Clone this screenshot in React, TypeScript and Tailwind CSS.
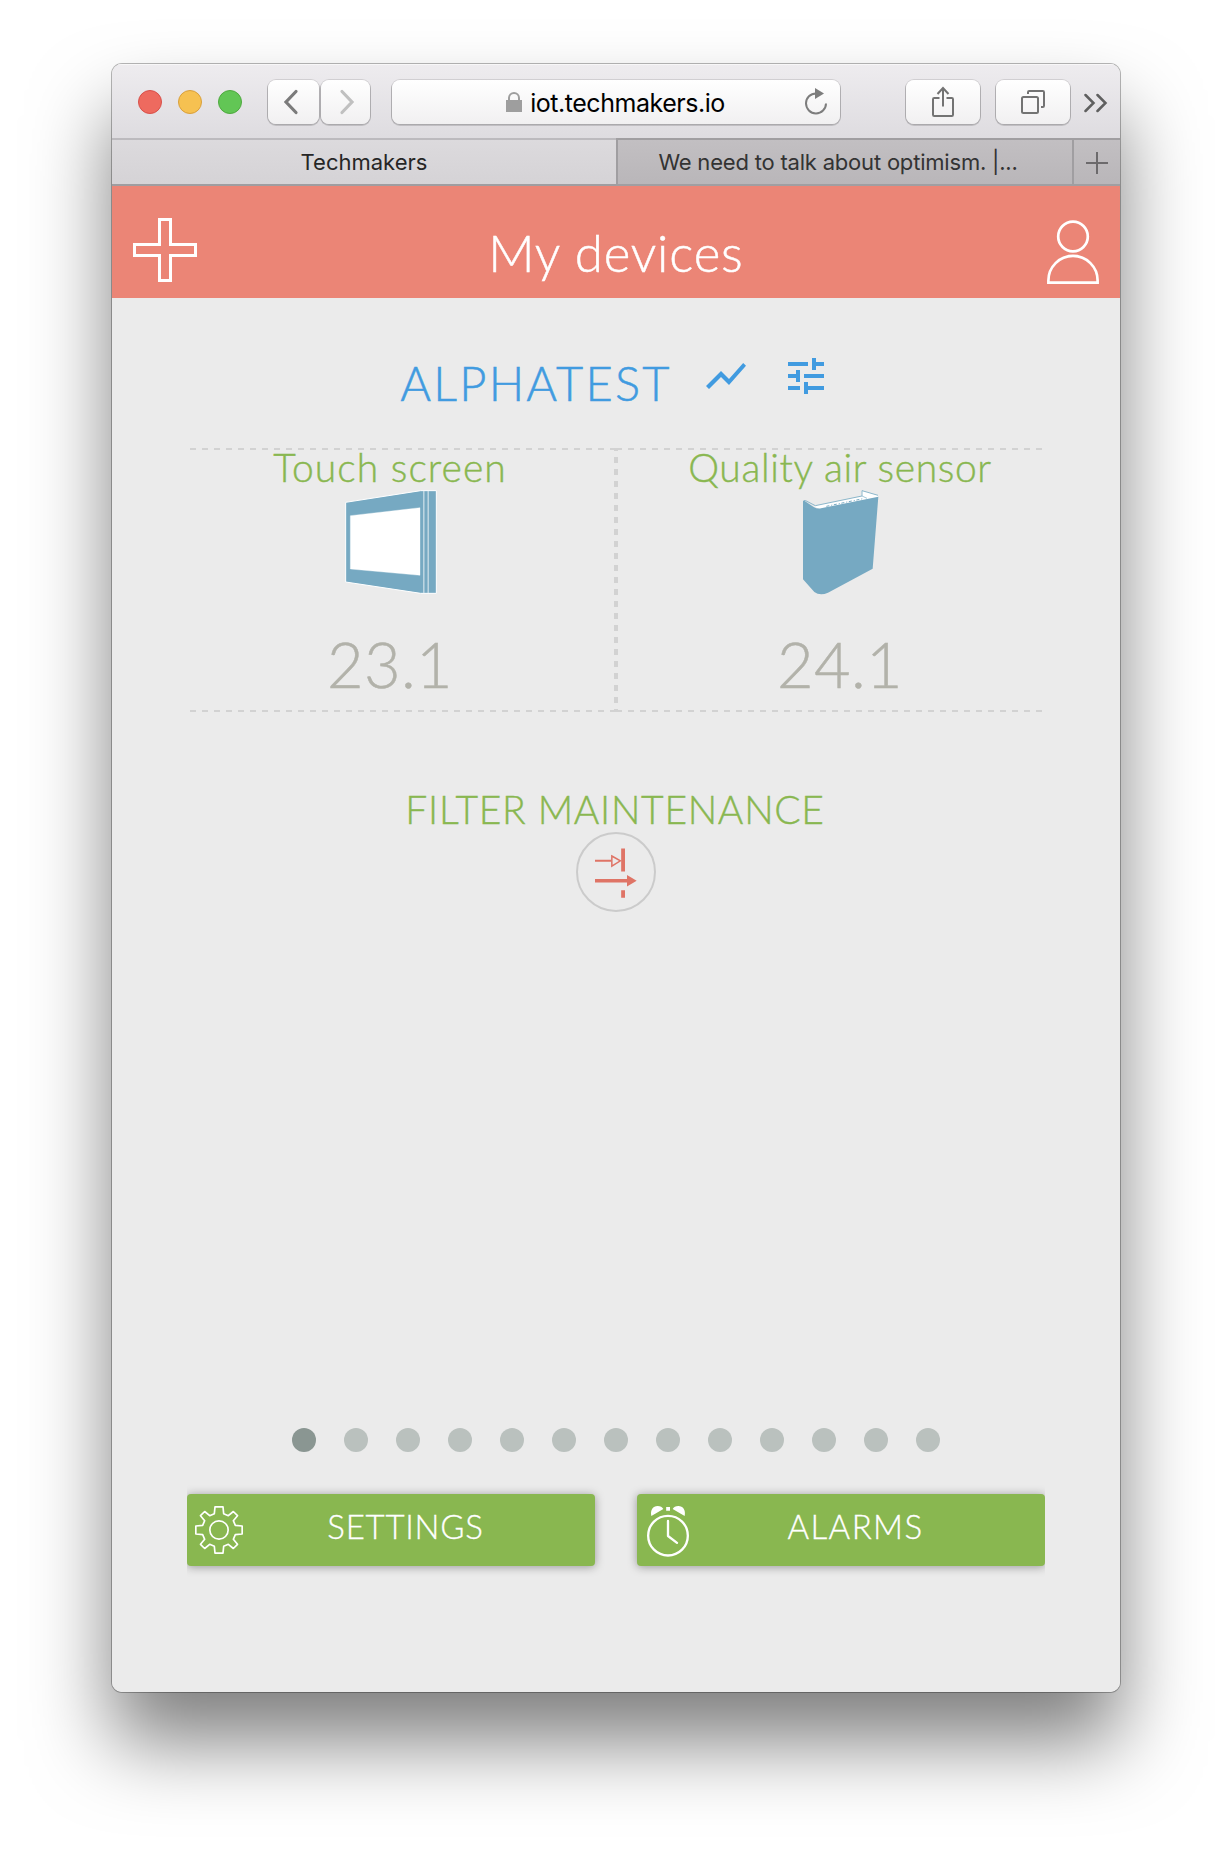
import type { ReactNode } from "react";
import { MdShowChart, MdTune } from "react-icons/md";

const BLUE = "#76a9c2";

function ToolbarButton({ className, children }: { className: string; children: ReactNode }) {
  return (
    <button
      className={`flex h-11 items-center justify-center rounded-[8px] bg-linear-to-b from-white to-[#f1f0f1] shadow-[0_0_0_1px_rgba(0,0,0,0.11),0_1px_0_1px_rgba(0,0,0,0.14)] ${className}`}
    >
      {children}
    </button>
  );
}

function Toolbar() {
  return (
    <div className="flex h-[74px] items-start bg-linear-to-b from-[#eeecef] to-[#dedce0] pt-4 pl-[26px] shadow-[inset_0_1px_0_#f8f7f8]">
      <div className="flex h-11 items-center gap-4">
        <span className="size-6 rounded-full border border-[#d8504a] bg-[#ee6a5f]" />
        <span className="size-6 rounded-full border border-[#d9a03c] bg-[#f6c151]" />
        <span className="size-6 rounded-full border border-[#4fa93f] bg-[#62c655]" />
      </div>
      <div className="ml-[26px] flex gap-0.5">
        <ToolbarButton className="w-[51px]">
          <svg width="16" height="26" viewBox="0 0 16 26" fill="none" stroke="#7b7b7b" strokeWidth="3.2" strokeLinecap="round" className="-ml-1.5">
            <path d="M13 2.500 3 13l10 10.500" />
          </svg>
        </ToolbarButton>
        <ToolbarButton className="w-[49px]">
          <svg width="16" height="26" viewBox="0 0 16 26" fill="none" stroke="#c0c0c0" strokeWidth="3.2" strokeLinecap="round" className="ml-0.5">
            <path d="M3 2.500 13 13 3 23.500" />
          </svg>
        </ToolbarButton>
      </div>
      <div className="ml-[22px] flex h-11 w-[448px] items-center rounded-[8px] bg-linear-to-b from-white to-[#f1f0f1] shadow-[0_0_0_1px_rgba(0,0,0,0.11),0_1px_0_1px_rgba(0,0,0,0.14)]">
        <div className="flex flex-1 items-center justify-center pl-[35px]">
          <svg width="16" height="20" viewBox="0 0 16 20" className="mr-[8px]">
            <rect x="0" y="8" width="16" height="12" fill="#9e9e9e" />
            <path d="M3 9V6a5 5 0 0 1 10 0v3" fill="none" stroke="#9e9e9e" strokeWidth="2" />
          </svg>
          <span className="pt-[3px] font-[Inter] text-[25px] leading-none tracking-[-0.47px] text-black">iot.techmakers.io</span>
        </div>
        <svg width="24" height="28" viewBox="0 0 24 28" fill="none" className="mr-3">
          <path d="M12 5.400A10 10 0 1 0 22 15.500" stroke="#7d7d7d" strokeWidth="2" />
          <path d="M11 0 20 5.500 11 11Z" fill="#7d7d7d" />
        </svg>
      </div>
      <ToolbarButton className="ml-[66px] w-[74px]">
        <svg width="24" height="32" viewBox="0 0 24 32" fill="none" stroke="#737373" strokeWidth="2">
          <path d="M8.500 12H3.200Q2 12 2 13.200V28.800Q2 30 3.200 30H20.800Q22 30 22 28.800V13.200Q22 12 20.800 12H15.500" />
          <path d="M12 20.500V2M6.500 8 12 2l5.500 6" />
        </svg>
      </ToolbarButton>
      <ToolbarButton className="ml-4 w-[74px]">
        <svg width="26" height="26" viewBox="0 0 26 26" fill="none" stroke="#737373" strokeWidth="2">
          <rect x="2" y="8" width="16" height="16" rx="1.500" />
          <path d="M8 5V3.200Q8 2 9.200 2H22.800Q24 2 24 3.200V16.800Q24 18 22.800 18H21" />
        </svg>
      </ToolbarButton>
      <svg width="24" height="20" viewBox="0 0 24 20" fill="none" stroke="#5f5f5f" strokeWidth="2.500" className="mt-[13px] ml-[14px]" strokeLinecap="round">
        <path d="M1.500 2 9.500 10l-8 8M13.500 2l8 8-8 8" />
      </svg>
    </div>
  );
}

function TabBar() {
  return (
    <div className="flex h-12 font-[Inter] text-[22px]">
      <div className="flex w-[504px] items-center justify-center border-t-2 border-b-2 border-t-[#bcbabe] border-b-[#9f9da0] bg-linear-to-b from-[#dcdadd] to-[#d5d3d6] text-[#262626]">
        Techmakers
      </div>
      <div className="flex w-[456px] items-center justify-center border-y-2 border-l-2 border-[#a09ea1] bg-linear-to-b from-[#c2bfc2] to-[#b9b6b9] pr-[14px] tracking-[-0.2px] whitespace-nowrap text-[#333]">
        We need to talk about optimism. |...
      </div>
      <div className="flex w-12 items-center justify-center border-y-2 border-l-2 border-[#a09ea1] bg-linear-to-b from-[#c2bfc2] to-[#b9b6b9]">
        <svg width="22" height="22" viewBox="0 0 22 22" stroke="#6c6a6c" strokeWidth="2" className="mt-0.5">
          <path d="M11 0v22M0 11h22" />
        </svg>
      </div>
    </div>
  );
}

function PageHeader() {
  return (
    <header className="flex h-28 items-start justify-between bg-[#eb8576] pr-5 pl-[21px] text-white">
      <svg width="64" height="64" viewBox="0 0 64 64" fill="none" stroke="white" strokeWidth="3" className="mt-8">
        <path d="M26.500 1.500h11v25h25v11h-25v25h-11v-25h-25v-11h25z" />
      </svg>
      <h1 className="mt-[37px] pr-[11px] text-[51px] leading-[60px] tracking-[0.84px] [-webkit-text-stroke:0.5px]">My devices</h1>
      <svg width="54" height="66" viewBox="0 0 54 66" fill="none" stroke="white" strokeWidth="2.700" className="mt-[33px]">
        <circle cx="27" cy="17.500" r="14.800" />
        <path d="M2.400 63.600V61.500a24.600 24.600 0 0 1 49.200 0v2.100z" />
      </svg>
    </header>
  );
}

function TouchScreenArt() {
  return (
    <svg width="94" height="106" viewBox="492 177 282 318" className="mt-[5px] ml-[2px]">
      <g stroke="white" strokeWidth="3" strokeLinejoin="round">
        <path d="M497 217 722 182H769V490H722L497 456Z" fill={BLUE} />
        <path d="M511 257 720 233V436L511 417Z" fill="white" strokeWidth="1" />
      </g>
      <path d="M731.500 183V489M744.500 183V489" stroke="#d3e3eb" strokeWidth="3.500" />
    </svg>
  );
}

function AirSensorArt() {
  return (
    <svg width="80" height="106" viewBox="574 177 240 318" className="mt-[5px] ml-[2px]">
      <path d="M612 228 756 199V182L805 196V203L630 238Z" fill="white" />
      <path d="M582 212 588 212 617 227 757 198V182L805 196" fill="none" stroke={BLUE} strokeWidth="2.500" />
      <path d="M757 198 772 205" fill="none" stroke={BLUE} strokeWidth="2" />
      <path d="M580 213 584 212 612 231Q622 237 634 235L806 200 789 416 655 488Q631 498 614 486L580 448Z" fill={BLUE} />
      <path d="M650 229 760 206" stroke={BLUE} strokeWidth="3" strokeDasharray="9 6 3 5" />
    </svg>
  );
}

function Device({ name, value, className, children }: { name: string; value: string; className: string; children: ReactNode }) {
  return (
    <div
      className={`flex h-[264px] w-[426px] flex-col items-center bg-[image:linear-gradient(90deg,#d2d2d2_50%,transparent_50%),linear-gradient(90deg,#d2d2d2_50%,transparent_50%),linear-gradient(180deg,#d2d2d2_50%,transparent_50%)] [background-size:12px_2px,12px_2px,2px_12px] [background-repeat:repeat-x,repeat-x,repeat-y] pt-0.5 ${className}`}
    >
      <h3 className="text-[39px] leading-[34px] whitespace-nowrap text-[#89b750] [-webkit-text-stroke:0.4px]">{name}</h3>
      {children}
      <p className="mt-[37px] text-[63px] leading-[64px] tracking-[0.4px] text-[#b2b2aa] [-webkit-text-stroke:0.5px]">{value}</p>
    </div>
  );
}

function FilterIcon() {
  return (
    <svg width="80" height="80" viewBox="558 186 240 240" className="mt-[3px]">
      <circle cx="678" cy="306" r="117" fill="none" stroke="#cbcbcb" strokeWidth="6" />
      <g fill="#df7466">
        <path d="M615 269.500H664V275.500H615ZM693.500 235.500H705V304.500H693.500ZM615 327H712V337.500H615ZM711 315 740 332 711 349.500ZM693.500 361H705V383.500H693.500Z" />
      </g>
      <path d="M665.500 258 691 272.500 665.500 288.500Z" fill="none" stroke="#df7466" strokeWidth="4.500" />
    </svg>
  );
}

function GearIcon() {
  return (
    <svg width="48" height="48" viewBox="-72 -72 144 144" fill="none" stroke="white" strokeWidth="5" strokeLinejoin="round">
      <path d="M-14-49-12-69.500H12L14-49 28-43 43-55.500 55.500-43 43-28 49-14 69.500-12V12L49 14 43 28 55.500 43 43 55.500 28 43 14 49 12 69.500H-12L-14 49-28 43-43 55.500-55.500 43-43 28-49 14-69.500 12V-12L-49-14-43-28-55.500-43-43-55.500-28-43Z" />
      <circle r="27.500" />
    </svg>
  );
}

function AlarmIcon() {
  return (
    <svg width="48" height="51" viewBox="105 318 144 153">
      <g fill="none" stroke="white" strokeWidth="7">
        <circle cx="174" cy="407" r="59.500" />
        <path d="M174 363V408L201 428.500" strokeLinecap="round" strokeLinejoin="round" />
      </g>
      <path d="M124 348C120 330 129 318 143 318 151 318 157 321 160 327ZM224 348C228 330 219 318 205 318 197 318 191 321 188 327ZM168.500 321H180V332.500H168.500Z" fill="white" />
    </svg>
  );
}

function ActionButton({ icon, children }: { icon: ReactNode; children: ReactNode }) {
  return (
    <button className="flex h-[72px] flex-1 items-start rounded-[4px] bg-[#89b750] pt-3 pr-[27px] pl-2 text-white shadow-[0_1px_10px_rgba(0,0,0,0.36)]">
      {icon}
      <span className="flex-1 pt-px text-center text-[33px] leading-[38px] [-webkit-text-stroke:0.3px]">{children}</span>
    </button>
  );
}

export default function App() {
  return (
    <div className="flex h-[1852px] w-[1232px] items-start overflow-hidden bg-white pt-16 pl-28">
      <div className="rounded-[10px] shadow-[0_0_0_1px_rgba(0,0,0,0.28),0_50px_80px_rgba(0,0,0,0.5)]">
        <div className="flex h-[1628px] w-[1008px] flex-col overflow-hidden rounded-[10px] bg-[#ebebeb] font-[Lato,sans-serif] font-light">
          <div className="font-normal">
            <Toolbar />
            <TabBar />
          </div>
          <PageHeader />
          <main className="flex flex-col items-center">
            <div className="mt-[54px] flex h-12 items-start pr-[2px] text-[#419be0]">
              <h2 className="mt-[7px] text-[47px] leading-[48px] tracking-[2.2px] [-webkit-text-stroke:0.5px]">ALPHATEST</h2>
              <MdShowChart size={48} className="ml-[30px]" />
              <MdTune size={48} className="ml-8" />
            </div>
            <section className="mt-12 flex w-[852px]">
              <Device
                name="Touch screen"
                value="23.1"
                className="[background-position:left_top,left_bottom,right_-3px] pr-[26px] tracking-[1.03px]"
              >
                <TouchScreenArt />
              </Device>
              <Device
                name="Quality air sensor"
                value="24.1"
                className="[background-position:left_top,left_bottom,left_-3px] pl-[22px] tracking-[0.63px]"
              >
                <AirSensorArt />
              </Device>
            </section>
            <h3 className="mt-[77px] pr-[2px] text-[39px] leading-10 tracking-[0.7px] text-[#89b750] [-webkit-text-stroke:0.4px]">FILTER MAINTENANCE</h3>
            <FilterIcon />
            <div className="mt-[516px] flex gap-7">
              {Array.from({ length: 13 }, (_, i) => (
                <span key={i} className={`size-6 rounded-full ${i === 0 ? "bg-[#8a9692]" : "bg-[#bac1be]"}`} />
              ))}
            </div>
            <div className="mt-[22px] flex w-[858px] gap-[42px] overflow-hidden py-5">
              <ActionButton icon={<GearIcon />}>
                <span className="tracking-[0.74px]">SETTINGS</span>
              </ActionButton>
              <ActionButton icon={<AlarmIcon />}>
                <span className="tracking-[1.4px]">ALARMS</span>
              </ActionButton>
            </div>
          </main>
        </div>
      </div>
    </div>
  );
}
